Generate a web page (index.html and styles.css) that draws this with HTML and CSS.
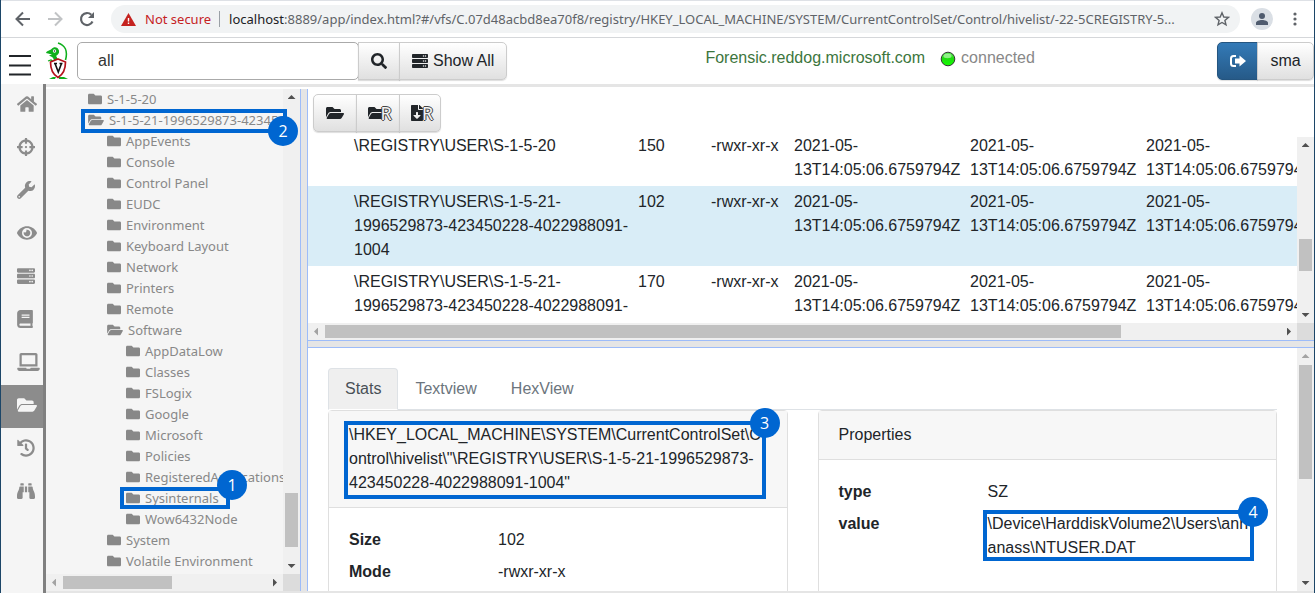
FILE: index.html
```html
<!DOCTYPE html>
<html lang="en">
<head>
<meta charset="utf-8">
<title>Velociraptor</title>
<link rel="stylesheet" href="styles.css">
</head>
<body>
<svg class="defs" aria-hidden="true">
  <symbol id="folder" viewBox="0 0 512 512"><path d="M464 128H272l-64-64H48C21.49 64 0 85.49 0 112v288c0 26.51 21.49 48 48 48h416c26.51 0 48-21.49 48-48V176c0-26.51-21.49-48-48-48z"/></symbol>
  <symbol id="folder-open" viewBox="0 0 576 512"><path d="M572.694 292.093L500.27 416.248A63.997 63.997 0 0 1 444.989 448H45.025c-18.523 0-30.064-20.093-20.731-36.093l72.424-124.155A64 64 0 0 1 152 256h399.964c18.523 0 30.064 20.093 20.73 36.093zM152 224h328v-48c0-26.51-21.49-48-48-48H272l-64-64H48C21.49 64 0 85.49 0 112v278.046l69.077-118.418C86.214 242.25 117.989 224 152 224z"/></symbol>
  <symbol id="server" viewBox="0 0 512 512"><path id="unit" d="M480 160H32c-17.673 0-32-14.327-32-32V64c0-17.673 14.327-32 32-32h448c17.673 0 32 14.327 32 32v64c0 17.673-14.327 32-32 32zm-48-88c-13.255 0-24 10.745-24 24s10.745 24 24 24 24-10.745 24-24-10.745-24-24-24zm-64 0c-13.255 0-24 10.745-24 24s10.745 24 24 24 24-10.745 24-24-10.745-24-24-24z"/><use href="#unit" y="160"/><use href="#unit" y="320"/></symbol>
  <symbol id="home" viewBox="0 0 576 512"><path d="M280.37 148.26L96 300.11V464a16 16 0 0 0 16 16l112.06-.29a16 16 0 0 0 15.92-16V368a16 16 0 0 1 16-16h64a16 16 0 0 1 16 16v95.64a16 16 0 0 0 16 16.05L464 480a16 16 0 0 0 16-16V300L295.67 148.26a12.19 12.19 0 0 0-15.3 0zM571.6 251.47L488 182.56V44.05a12 12 0 0 0-12-12h-56a12 12 0 0 0-12 12v72.61L318.47 43a48 48 0 0 0-61 0L4.34 251.47a12 12 0 0 0-1.6 16.9l25.5 31A12 12 0 0 0 45.15 301l235.22-193.74a12.19 12.19 0 0 1 15.3 0L530.9 301a12 12 0 0 0 16.9-1.6l25.5-31a12 12 0 0 0-1.7-16.93z"/></symbol>
  <symbol id="eye" viewBox="0 0 576 512"><path d="M572.52 241.4C518.29 135.59 410.93 64 288 64S57.68 135.64 3.48 241.41a32.35 32.35 0 0 0 0 29.19C57.71 376.41 165.07 448 288 448s230.32-71.64 284.52-177.41a32.35 32.35 0 0 0 0-29.19zM288 400a144 144 0 1 1 144-144 143.93 143.93 0 0 1-144 144zm0-240a95.31 95.31 0 0 0-25.31 3.79 47.85 47.85 0 0 1-66.9 66.9A95.78 95.78 0 1 0 288 160z"/></symbol>
  <symbol id="wrench" viewBox="0 0 512 512"><path d="M507.73 109.1c-2.24-9.03-13.54-12.09-20.12-5.51l-74.36 74.36-67.88-11.31-11.31-67.88 74.36-74.36c6.62-6.62 3.43-17.9-5.66-20.16-47.38-11.74-99.55.91-136.58 37.93-39.64 39.64-50.55 97.1-34.05 147.2L18.74 402.76c-24.99 24.99-24.99 65.51 0 90.5 24.99 24.99 65.51 24.99 90.5 0l213.21-213.21c50.12 16.71 107.47 5.68 147.37-34.22 37.07-37.07 49.7-89.32 37.91-136.73zM64 472c-13.25 0-24-10.75-24-24 0-13.26 10.75-24 24-24s24 10.74 24 24c0 13.25-10.75 24-24 24z"/></symbol>
  <symbol id="search" viewBox="0 0 512 512"><path d="M505 442.7L405.3 343c-4.5-4.5-10.6-7-17-7H372c27.6-35.3 44-79.7 44-128C416 93.1 322.9 0 208 0S0 93.1 0 208s93.1 208 208 208c48.3 0 92.7-16.4 128-44v16.3c0 6.4 2.5 12.5 7 17l99.7 99.7c9.4 9.4 24.6 9.4 33.9 0l28.3-28.3c9.4-9.4 9.4-24.6.1-34zM208 336c-70.7 0-128-57.2-128-128 0-70.7 57.2-128 128-128 70.7 0 128 57.2 128 128 0 70.7-57.2 128-128 128z"/></symbol>
  <symbol id="book" viewBox="0 0 448 512"><path d="M448 360V24c0-13.3-10.7-24-24-24H96C43 0 0 43 0 96v320c0 53 43 96 96 96h328c13.3 0 24-10.7 24-24v-16c0-7.5-3.5-14.3-8.9-18.7-4.2-15.4-4.2-59.3 0-74.7 5.4-4.3 8.9-11.1 8.9-18.6zM128 134c0-3.3 2.7-6 6-6h212c3.3 0 6 2.7 6 6v20c0 3.3-2.7 6-6 6H134c-3.3 0-6-2.7-6-6v-20zm0 64c0-3.3 2.7-6 6-6h212c3.3 0 6 2.7 6 6v20c0 3.3-2.7 6-6 6H134c-3.3 0-6-2.7-6-6v-20zm253.4 250H96c-17.7 0-32-14.3-32-32 0-17.6 14.4-32 32-32h285.4c-1.9 17.1-1.9 46.9 0 64z"/></symbol>
  <symbol id="laptop" viewBox="0 0 640 512"><path d="M624 416H381.54c-.74 19.81-14.71 32-32.74 32H288c-18.69 0-33.02-17.47-32.77-32H16c-8.8 0-16 7.2-16 16v16c0 35.2 28.8 64 64 64h512c35.2 0 64-28.8 64-64v-16c0-8.8-7.2-16-16-16zM576 48c0-26.4-21.6-48-48-48H112C85.6 0 64 21.6 64 48v336h512V48zm-64 272H128V64h384v256z"/></symbol>
  <symbol id="history" viewBox="0 0 512 512"><path d="M504 255.531c.253 136.64-111.18 248.372-247.82 248.468-59.015.042-113.223-20.53-155.822-54.911-11.077-8.94-11.905-25.541-1.839-35.607l11.267-11.267c8.609-8.609 22.353-9.551 31.891-1.984C173.062 425.135 212.781 440 256 440c101.705 0 184-82.311 184-184 0-101.705-82.311-184-184-184-48.814 0-93.149 18.969-126.068 49.932l50.754 50.754c10.08 10.08 2.941 27.314-11.313 27.314H24c-8.837 0-16-7.163-16-16V38.627c0-14.254 17.234-21.393 27.314-11.314l49.372 49.372C129.209 34.136 189.552 8 256 8c136.81 0 247.747 110.78 248 247.531zm-180.912 78.784l9.823-12.63c8.138-10.463 6.253-25.542-4.21-33.679L288 256.349V152c0-13.255-10.745-24-24-24h-16c-13.255 0-24 10.745-24 24v135.651l65.409 50.874c10.463 8.137 25.541 6.253 33.679-4.21z"/></symbol>
  <symbol id="binoculars" viewBox="0 0 512 512"><path d="M416 48c0-8.84-7.16-16-16-16h-64c-8.84 0-16 7.16-16 16v48h96V48zM63.91 159.99C61.4 253.84 3.46 274.22 0 404v44c0 17.67 14.33 32 32 32h96c17.67 0 32-14.33 32-32V288h32V128H95.84c-17.63 0-31.45 14.37-31.93 31.99zm384.18 0c-.48-17.62-14.3-31.99-31.93-31.99H320v160h32v160c0 17.67 14.33 32 32 32h96c17.67 0 32-14.33 32-32v-44c-3.46-129.78-61.4-150.16-63.91-244.01zM176 32h-64c-8.84 0-16 7.16-16 16v48h96V48c0-8.84-7.16-16-16-16zm48 256h64V128h-64v160z"/></symbol>
  <symbol id="crosshairs" viewBox="0 0 512 512"><path d="M500 224h-30.364C455.724 130.325 381.675 56.276 288 42.364V12c0-6.627-5.373-12-12-12h-40c-6.627 0-12 5.373-12 12v30.364C130.325 56.276 56.276 130.325 42.364 224H12c-6.627 0-12 5.373-12 12v40c0 6.627 5.373 12 12 12h30.364C56.276 381.675 130.325 455.724 224 469.636V500c0 6.627 5.373 12 12 12h40c6.627 0 12-5.373 12-12v-30.364C381.675 455.724 455.724 381.675 469.636 288H500c6.627 0 12-5.373 12-12v-40c0-6.627-5.373-12-12-12zM288 404.634V364c0-6.627-5.373-12-12-12h-40c-6.627 0-12 5.373-12 12v40.634C165.826 392.232 119.783 346.243 107.366 288H148c6.627 0 12-5.373 12-12v-40c0-6.627-5.373-12-12-12h-40.634C119.768 165.826 165.757 119.783 224 107.366V148c0 6.627 5.373 12 12 12h40c6.627 0 12-5.373 12-12v-40.634C346.174 119.768 392.217 165.757 404.634 224H364c-6.627 0-12 5.373-12 12v40c0 6.627 5.373 12 12 12h40.634C392.232 346.174 346.243 392.217 288 404.634zM288 256c0 17.673-14.327 32-32 32s-32-14.327-32-32c0-17.673 14.327-32 32-32s32 14.327 32 32z"/></symbol>
  <symbol id="download" viewBox="0 0 384 512"><path d="M224 136V0H24C10.7 0 0 10.7 0 24v464c0 13.3 10.7 24 24 24h336c13.3 0 24-10.7 24-24V160H248c-13.2 0-24-10.8-24-24zm76.45 211.36l-96.42 95.7c-6.65 6.61-17.39 6.61-24.04 0l-96.42-95.7C73.42 337.29 80.54 320 94.82 320H160v-80c0-8.84 7.16-16 16-16h32c8.84 0 16 7.16 16 16v80h65.18c14.28 0 21.4 17.29 11.27 27.36zM377 105L279.1 7c-4.5-4.5-10.6-7-17-7H256v128h128v-6.1c0-6.3-2.5-12.4-7-16.9z"/></symbol>
</svg>

<header class="browser">
  <button class="nav-btn" aria-label="Back"><svg width="16" height="16" viewBox="0 0 16 16" fill="none" stroke="#5f6368" stroke-width="2"><path d="M15 8H2M8 1.500L1.500 8L8 14.500"/></svg></button>
  <button class="nav-btn" aria-label="Forward"><svg width="16" height="16" viewBox="0 0 16 16" fill="none" stroke="#c1c3c5" stroke-width="2"><path d="M1 8H14M8 1.500L14.500 8L8 14.500"/></svg></button>
  <button class="nav-btn" aria-label="Reload"><svg width="16" height="16" viewBox="0 0 16 16"><path d="M13.500 10.500A6 6 0 1 1 12.300 3.800" fill="none" stroke="#5f6368" stroke-width="2.200"/><path d="M15 1v6H9z" fill="#5f6368"/></svg></button>
  <div class="address">
    <svg class="warn" width="15" height="13" viewBox="0 0 15 13"><path d="M7.500 0L15 13H0z" fill="#c5221f"/><path d="M6.800 5h1.400v3.500H6.800zM6.800 9.500h1.400V11H6.800z" fill="#fff"/></svg>
    <span class="insecure">Not secure</span>
    <span class="url"><b>localhost</b>:8889/app/index.html?#/vfs/C.07d48acbd8ea70f8/registry/HKEY_LOCAL_MACHINE/SYSTEM/CurrentControlSet/Control/hivelist/-22-5CREGISTRY-5...</span>
    <button class="star" aria-label="Bookmark"><svg width="16" height="16" viewBox="0 0 16 16" fill="none" stroke="#5f6368" stroke-width="1.400"><path d="M8 1.800l1.800 4.200 4.600.4-3.500 3 1.100 4.500L8 11.500l-4 2.400 1.100-4.500-3.500-3 4.600-.4z"/></svg></button>
  </div>
  <button class="avatar" aria-label="Profile"><svg width="12" height="12" viewBox="0 0 12 12" fill="#4f5b6e"><circle cx="6" cy="3" r="3"/><path d="M0 12V10c0-2 3-3 6-3s6 1 6 3v2z"/></svg></button>
  <button class="more" aria-label="More"><svg width="4" height="14" viewBox="0 0 4 14" fill="#5f6368"><circle cx="2" cy="2" r="1.600"/><circle cx="2" cy="7" r="1.600"/><circle cx="2" cy="12" r="1.600"/></svg></button>
</header>

<div class="topbar">
  <button class="menu" aria-label="Menu"><svg width="22" height="22" viewBox="0 0 22 22" stroke="#212529" stroke-width="2.200"><path d="M0 2h22M0 11.500h22M0 20.500h22"/></svg></button>
  <svg class="logo" width="23" height="38" viewBox="0 0 23 38">
    <path d="M12 1c7 2 10 8 7.500 17" fill="none" stroke="#0faf1c" stroke-width="1.600"/>
    <path d="M0 11C1 8 4 9 5.500 7 8 4 12 5 13 8.500c.5 3-1 4-3 5.500 1 1 1.500 2 1 4l-2 1.500C7 18 8 16 6 15l-3-1.500 3-1z" fill="#0faf1c"/>
    <path d="M2 19l3-1 3 2" fill="none" stroke="#0faf1c" stroke-width="1.300"/>
    <circle cx="8.500" cy="9" r="1.700" fill="#fff"/><circle cx="8.500" cy="9" r=".8"/>
    <path d="M3 37l4-2 3 0-1 2zM13 37l0-2 5 0 4 2z" fill="#0faf1c"/>
    <path d="M12 17l7.500 3c0 7-1.500 12-7.500 15.500C6 32 4.500 27 4.500 20z" fill="#fff" stroke="#b5121b" stroke-width="1.700"/>
    <path d="M8 21.500h3M13.500 21.500h3M9.200 22l3.100 8 3-8" fill="none" stroke="#111" stroke-width="1.600"/>
  </svg>
  <div class="group search">
    <input class="query" type="text" value="all" aria-label="Search clients">
    <button class="btn icon" aria-label="Search"><svg width="16" height="16"><use href="#search"/></svg></button>
    <button class="btn"><svg width="16" height="16"><use href="#server"/></svg>Show All</button>
  </div>
  <div class="client">
    <a class="host" href="#">Forensic.reddog.microsoft.com</a>
    <svg width="16" height="16" viewBox="0 0 16 16"><defs><linearGradient id="led" x2="0" y2="1"><stop offset="0" stop-color="#5fe85a"/><stop offset=".45" stop-color="#1fdc10"/><stop offset="1" stop-color="#12ff00"/></linearGradient></defs><circle cx="8" cy="8" r="6.800" fill="url(#led)" stroke="#333" stroke-width="1"/><ellipse cx="7.500" cy="5" rx="4" ry="2.200" fill="#b5f5ae" opacity=".7"/></svg>
    <span>connected</span>
  </div>
  <div class="group user">
    <button class="btn primary" aria-label="Log out"><svg width="16" height="14" viewBox="0 0 16 14"><path d="M6 2H3.500Q1 2 1 4.500v5Q1 12 3.500 12H6" fill="none" stroke="#fff" stroke-width="2"/><path d="M5 4.500h4.500V1.500L16 7l-6.500 5.500v-3H5z" fill="#fff"/></svg></button>
    <button class="btn name">sma</button>
  </div>
</div>

<div class="app">
  <nav class="side">
    <a href="#" aria-label="Home"><svg width="20" height="18"><use href="#home"/></svg></a>
    <a href="#" aria-label="Hunts"><svg width="18" height="18"><use href="#crosshairs"/></svg></a>
    <a href="#" aria-label="Artifacts"><svg width="18" height="18"><use href="#wrench"/></svg></a>
    <a href="#" aria-label="Events"><svg width="20" height="18"><use href="#eye"/></svg></a>
    <a href="#" aria-label="Server"><svg width="18" height="18"><use href="#server"/></svg></a>
    <a href="#" aria-label="Notebooks"><svg width="16" height="18"><use href="#book"/></svg></a>
    <a href="#" aria-label="Host"><svg width="23" height="18"><use href="#laptop"/></svg></a>
    <a class="on" href="#" aria-label="Files"><svg width="20" height="18"><use href="#folder-open"/></svg></a>
    <a href="#" aria-label="Collected"><svg width="18" height="18"><use href="#history"/></svg></a>
    <a href="#" aria-label="Monitoring"><svg width="18" height="18"><use href="#binoculars"/></svg></a>
  </nav>
  <div class="work">
    <section class="tree-pane">
      <div class="tree-clip">
        <ul class="tree">
          <li><svg width="14" height="14"><use href="#folder"/></svg>S-1-5-20</li>
          <li><svg width="16" height="14"><use href="#folder-open"/></svg>S-1-5-21-1996529873-423450228-4022988091-1004
            <ul>
              <li><svg width="14" height="14"><use href="#folder"/></svg>AppEvents</li>
              <li><svg width="14" height="14"><use href="#folder"/></svg>Console</li>
              <li><svg width="14" height="14"><use href="#folder"/></svg>Control Panel</li>
              <li><svg width="14" height="14"><use href="#folder"/></svg>EUDC</li>
              <li><svg width="14" height="14"><use href="#folder"/></svg>Environment</li>
              <li><svg width="14" height="14"><use href="#folder"/></svg>Keyboard Layout</li>
              <li><svg width="14" height="14"><use href="#folder"/></svg>Network</li>
              <li><svg width="14" height="14"><use href="#folder"/></svg>Printers</li>
              <li><svg width="14" height="14"><use href="#folder"/></svg>Remote</li>
              <li><svg width="16" height="14"><use href="#folder-open"/></svg>Software
                <ul>
                  <li><svg width="14" height="14"><use href="#folder"/></svg>AppDataLow</li>
                  <li><svg width="14" height="14"><use href="#folder"/></svg>Classes</li>
                  <li><svg width="14" height="14"><use href="#folder"/></svg>FSLogix</li>
                  <li><svg width="14" height="14"><use href="#folder"/></svg>Google</li>
                  <li><svg width="14" height="14"><use href="#folder"/></svg>Microsoft</li>
                  <li><svg width="14" height="14"><use href="#folder"/></svg>Policies</li>
                  <li><svg width="14" height="14"><use href="#folder"/></svg>RegisteredApplications</li>
                  <li><svg width="14" height="14"><use href="#folder"/></svg>Sysinternals</li>
                  <li><svg width="14" height="14"><use href="#folder"/></svg>Wow6432Node</li>
                </ul>
              </li>
              <li><svg width="14" height="14"><use href="#folder"/></svg>System</li>
              <li><svg width="14" height="14"><use href="#folder"/></svg>Volatile Environment</li>
            </ul>
          </li>
        </ul>
      </div>
      <div class="vbar tree-v"><i class="up"></i><i class="thumb"></i><i class="down"></i></div>
      <div class="hbar tree-h"><i class="prev off"></i><i class="thumb"></i><i class="next"></i></div>
      <div class="corner"></div>
      <div class="mark mark-user"><span>2</span></div>
      <div class="mark mark-sys"><span>1</span></div>
    </section>
    <div class="split-v"></div>
    <main>
      <section class="files">
        <div class="group tools">
          <button class="btn icon" aria-label="Refresh directory"><svg width="18" height="16"><use href="#folder-open"/></svg></button>
          <button class="btn icon" aria-label="Refresh recursively"><svg width="18" height="16"><use href="#folder-open"/></svg><span class="rec over">R</span></button>
          <button class="btn icon" aria-label="Download recursively"><svg width="12" height="16"><use href="#download"/></svg><span class="rec">R</span></button>
        </div>
        <div class="grid">
          <div class="grid-clip">
            <table class="list">
              <colgroup><col class="c-dl"><col class="c-name"><col class="c-size"><col class="c-mode"><col class="c-time"><col class="c-time"><col class="c-time"></colgroup>
              <tbody>
                <tr><td></td><td>\REGISTRY\USER\S-1-5-20</td><td>150</td><td>-rwxr-xr-x</td><td>2021-05-<br>13T14:05:06.6759794Z</td><td>2021-05-<br>13T14:05:06.6759794Z</td><td>2021-05-<br>13T14:05:06.6759794Z</td></tr>
                <tr class="selected"><td></td><td>\REGISTRY\USER\S-1-5-21-<br>1996529873-423450228-4022988091-<br>1004</td><td>102</td><td>-rwxr-xr-x</td><td>2021-05-<br>13T14:05:06.6759794Z</td><td>2021-05-<br>13T14:05:06.6759794Z</td><td>2021-05-<br>13T14:05:06.6759794Z</td></tr>
                <tr><td></td><td>\REGISTRY\USER\S-1-5-21-<br>1996529873-423450228-4022988091-</td><td>170</td><td>-rwxr-xr-x</td><td>2021-05-<br>13T14:05:06.6759794Z</td><td>2021-05-<br>13T14:05:06.6759794Z</td><td>2021-05-<br>13T14:05:06.6759794Z</td></tr>
              </tbody>
            </table>
          </div>
          <div class="vbar grid-v"><i class="up"></i><i class="thumb"></i><i class="down"></i></div>
          <div class="hbar grid-h"><i class="prev off"></i><i class="thumb"></i><i class="next"></i></div>
          <div class="corner"></div>
        </div>
      </section>
      <div class="split-h"></div>
      <section class="detail">
        <div class="detail-body">
          <div class="tabs" role="tablist">
            <button role="tab" class="tab active" aria-selected="true">Stats</button>
            <button role="tab" class="tab">Textview</button>
            <button role="tab" class="tab">HexView</button>
          </div>
          <div class="cards">
            <article class="card">
              <div class="card-head path">\HKEY_LOCAL_MACHINE\SYSTEM\CurrentControlSet\C<wbr>ontrol\hivelist\"\REGISTRY\USER\S-1-5-21-1996529873-<wbr>423450228-4022988091-1004"<div class="mark mark-path"><span>3</span></div></div>
              <dl>
                <dt>Size</dt><dd>102</dd>
                <dt>Mode</dt><dd>-rwxr-xr-x</dd>
              </dl>
            </article>
            <article class="card">
              <div class="card-head">Properties</div>
              <dl>
                <dt>type</dt><dd>SZ</dd>
                <dt>value</dt><dd class="path">\Device\HarddiskVolume2\Users\ann<wbr>anass\NTUSER.DAT<div class="mark mark-value"><span>4</span></div></dd>
              </dl>
            </article>
          </div>
        </div>
        <div class="vbar detail-v"><i class="up off"></i><i class="thumb"></i><i class="down"></i></div>
      </section>
    </main>
  </div>
</div>
</body>
</html>
```
FILE: styles.css
```css
* { box-sizing: border-box; }

body {
  margin: 0;
  height: 100vh;
  display: flex;
  flex-direction: column;
  overflow: hidden;
  border: solid #1c4668;
  border-width: 0 1px;
  background: #fff;
  color: #212529;
  font: 16px/24px "Liberation Sans", Arial, sans-serif;
}

.defs { position: absolute; width: 0; height: 0; }
svg { display: block; flex: none; }
svg:not([fill]) { fill: currentColor; }
button { margin: 0; padding: 0; border: 0; background: none; color: inherit; font: inherit; }
a { color: inherit; text-decoration: none; }
ul { list-style: none; margin: 0; padding: 0; }

/* browser bar */
.browser {
  flex: none;
  display: flex;
  align-items: center;
  height: 38px;
  padding: 0 17px 0 14px;
  border-top: 1px solid #dee1e6;
  border-bottom: 1px solid #d5d7da;
  font: 13px/20px "Noto Sans", "Open Sans", sans-serif;
}
.nav-btn { width: 16px; margin-right: 16px; }
.address {
  flex: 1;
  min-width: 0;
  display: flex;
  align-items: center;
  height: 28px;
  margin-right: 11px;
  padding: 0 10px;
  border-radius: 14px;
  background: #f1f3f4;
}
.warn { margin-right: 9px; }
.insecure {
  flex: none;
  margin-right: 9px;
  padding-right: 8px;
  line-height: 16px;
  border-right: 1px solid #9aa0a6;
  color: #c5221f;
}
.url { flex: 1; min-width: 0; overflow: hidden; white-space: nowrap; color: #5f6368; }
.url b { font-weight: 400; color: #202124; }
.avatar {
  width: 22px;
  height: 22px;
  margin-right: 20px;
  border-radius: 50%;
  background: #dadfe5;
  display: flex;
  align-items: center;
  justify-content: center;
}

/* application header */
.topbar { flex: none; display: flex; align-items: flex-start; height: 46px; padding-top: 4px; }
.menu { margin: 12px 15px 0 8px; }
.logo { margin-right: 8px; }
.group { display: flex; }
.btn {
  display: flex;
  align-items: center;
  justify-content: center;
  gap: 5px;
  height: 38px;
  padding: 0 12px;
  border: 1px solid #ccc;
  background: linear-gradient(#fff, #e0e0e0);
  box-shadow: 0 1px 1px #0002;
}
.btn + .btn, .query + .btn { margin-left: -1px; }
.btn:last-child { border-radius: 0 5px 5px 0; }
.btn.icon:first-child { border-radius: 5px 0 0 5px; }
.query {
  width: 282px;
  height: 38px;
  padding: 0 20px;
  border: 1px solid #aaa;
  border-radius: 5px;
  background: #fff;
  color: #333;
  font: inherit;
}
.client {
  flex: 1;
  display: flex;
  align-items: flex-start;
  justify-content: center;
  gap: 5px;
  padding: 4px 0 0 16px;
  color: #888;
}
.client svg { margin: 5px 0 0 10px; }
.host { color: #3c763d; }
.primary {
  width: 41px;
  border-color: #245580;
  border-radius: 5px 0 0 5px;
  background: linear-gradient(#337ab7, #265a88);
}
.user .name { width: 57px; }

/* main area */
.app { flex: 1; min-height: 0; display: flex; }
.side { flex: none; width: 45px; border-right: 3px solid #808080; background: #f5f5f5; color: #8c8c8c; }
.side a { display: flex; align-items: center; height: 43px; padding: 0 0 3px 16px; }
.side .on { background: #8c8c8c; color: #f5f5f5; }
.work {
  flex: 1;
  min-width: 0;
  display: flex;
  padding-top: 2px;
  border: solid #e5e5e5;
  border-width: 3px 0 2px;
}

/* scroll bars */
.vbar, .hbar { display: flex; background: #f0f0f0; }
.vbar { flex: none; flex-direction: column; width: 17px; padding: 0 2px; }
.hbar { height: 17px; padding: 2px 0; }
.vbar i, .hbar i { flex: none; }
.up, .down { align-self: center; height: 17px; width: 8px; background: #505050; }
.up { clip-path: polygon(50% 6px, 100% 10px, 0 10px); }
.down { margin-top: auto; clip-path: polygon(0 7px, 100% 7px, 50% 11px); }
.prev, .next { align-self: center; width: 17px; height: 8px; background: #505050; }
.prev { clip-path: polygon(10px 0, 10px 100%, 6px 50%); }
.next { margin-left: auto; clip-path: polygon(7px 0, 11px 50%, 7px 100%); }
.off { background: #a3a3a3; }
.thumb { background: #c1c1c1; }
.corner { background: #dcdcdc; }

/* tree */
.tree-pane {
  position: relative;
  flex: none;
  width: 254px;
  display: grid;
  grid-template: minmax(0, 1fr) 17px / minmax(0, 1fr) 17px;
  background: #f5f5f5;
}
.tree-clip { overflow: hidden; }
.tree {
  padding-left: 42px;
  color: #888;
  font: 13px/21px "Noto Sans", "Open Sans", sans-serif;
  white-space: nowrap;
}
.tree svg { display: inline-block; margin-right: 5px; vertical-align: -2px; }
.tree ul { padding-left: 19px; }
.tree-v .thumb { margin-top: 387px; height: 54px; }
.tree-h .thumb { width: 109px; }

/* splitters */
.split-v { flex: none; width: 8px; border: solid #9dbcf9; border-width: 0 1px; background: #e5e5e5; }
.split-h { flex: none; height: 8px; border: solid #9dbcf9; border-width: 1px 0; background: #e5e5e5; }

/* file list */
main { flex: 1; min-width: 0; display: flex; flex-direction: column; }
.files { flex: none; }
.tools { padding: 5px; }
.tools .btn { width: 44px; gap: 0; padding: 0 5px; }
.tools .btn:nth-child(2) { padding-left: 9px; }
.tools .btn:last-child { width: 42px; padding-left: 9px; }
.rec {
  margin-left: -1px;
  color: #f2f2f2;
  font: 18px/18px "Noto Sans", sans-serif;
  text-shadow: 1px 0 #444, -1px 0 #444, 0 1px #444, 0 -1px #444;
}
.over { margin-left: -6px; }
.grid { display: grid; grid-template: 186px 17px / minmax(0, 1fr) 17px; }
.grid-clip { overflow: hidden; }
.list { width: 1009px; margin-top: -7px; border-collapse: collapse; table-layout: fixed; }
.list td { padding: 4px 5px; vertical-align: top; white-space: nowrap; }
.selected { background: #d9edf7; }
.c-dl { width: 41px; }
.c-name { width: 284px; }
.c-size { width: 73px; }
.c-mode { width: 83px; }
.c-time { width: 176px; }
.grid-v .thumb { margin-top: 85px; height: 32px; }
.grid-h .thumb { width: 796px; }

/* details */
.detail { flex: 1; min-height: 0; display: flex; overflow: hidden; }
.detail-body { flex: 1; min-width: 0; padding: 20px 20px 0; }
.tabs { display: flex; border-bottom: 1px solid #dee2e6; }
.tab {
  height: 42px;
  margin-bottom: -1px;
  padding: 0 16px;
  border: 1px solid transparent;
  border-radius: 4px 4px 0 0;
  color: #6c757d;
}
.tab.active { border-color: #dee2e6 #dee2e6 #fff; background: #efefef; color: #495057; }
.cards { display: grid; grid-template-columns: repeat(2, minmax(0, 1fr)); gap: 30px; }
.card { min-width: 0; min-height: 240px; border: 1px solid #dfdfdf; border-radius: 4px; }
.card-head { padding: 12px 20px; border-bottom: 1px solid #dfdfdf; background: #f7f7f7; }
.card dl { display: grid; grid-template-columns: 119px minmax(0, 1fr); gap: 8px 30px; margin: 0; padding: 20px; }
.card dt { font-weight: 700; }
.card dd { margin: 0; }
.path { position: relative; }
.detail-v .thumb { height: 114px; }

/* numbered call-outs */
.mark { position: absolute; border: 4px solid #0066d1; }
.mark span {
  position: absolute;
  top: -17px;
  right: -18px;
  width: 30px;
  height: 30px;
  border-radius: 50%;
  background: #0066d1;
  color: #fff;
  font: 16px/30px "Open Sans", sans-serif;
  text-align: center;
}
.mark-user { left: 35px; top: 20px; width: 206px; height: 24px; }
.mark-user span { top: 3px; right: -15px; }
.mark-sys { left: 74px; top: 398px; width: 110px; height: 22px; }
.mark-sys span { top: -21px; right: -21px; }
.mark-path { inset: 10px 21px 8px 15px; }
.mark-value { inset: -2px 2px -1px -5px; }
```
